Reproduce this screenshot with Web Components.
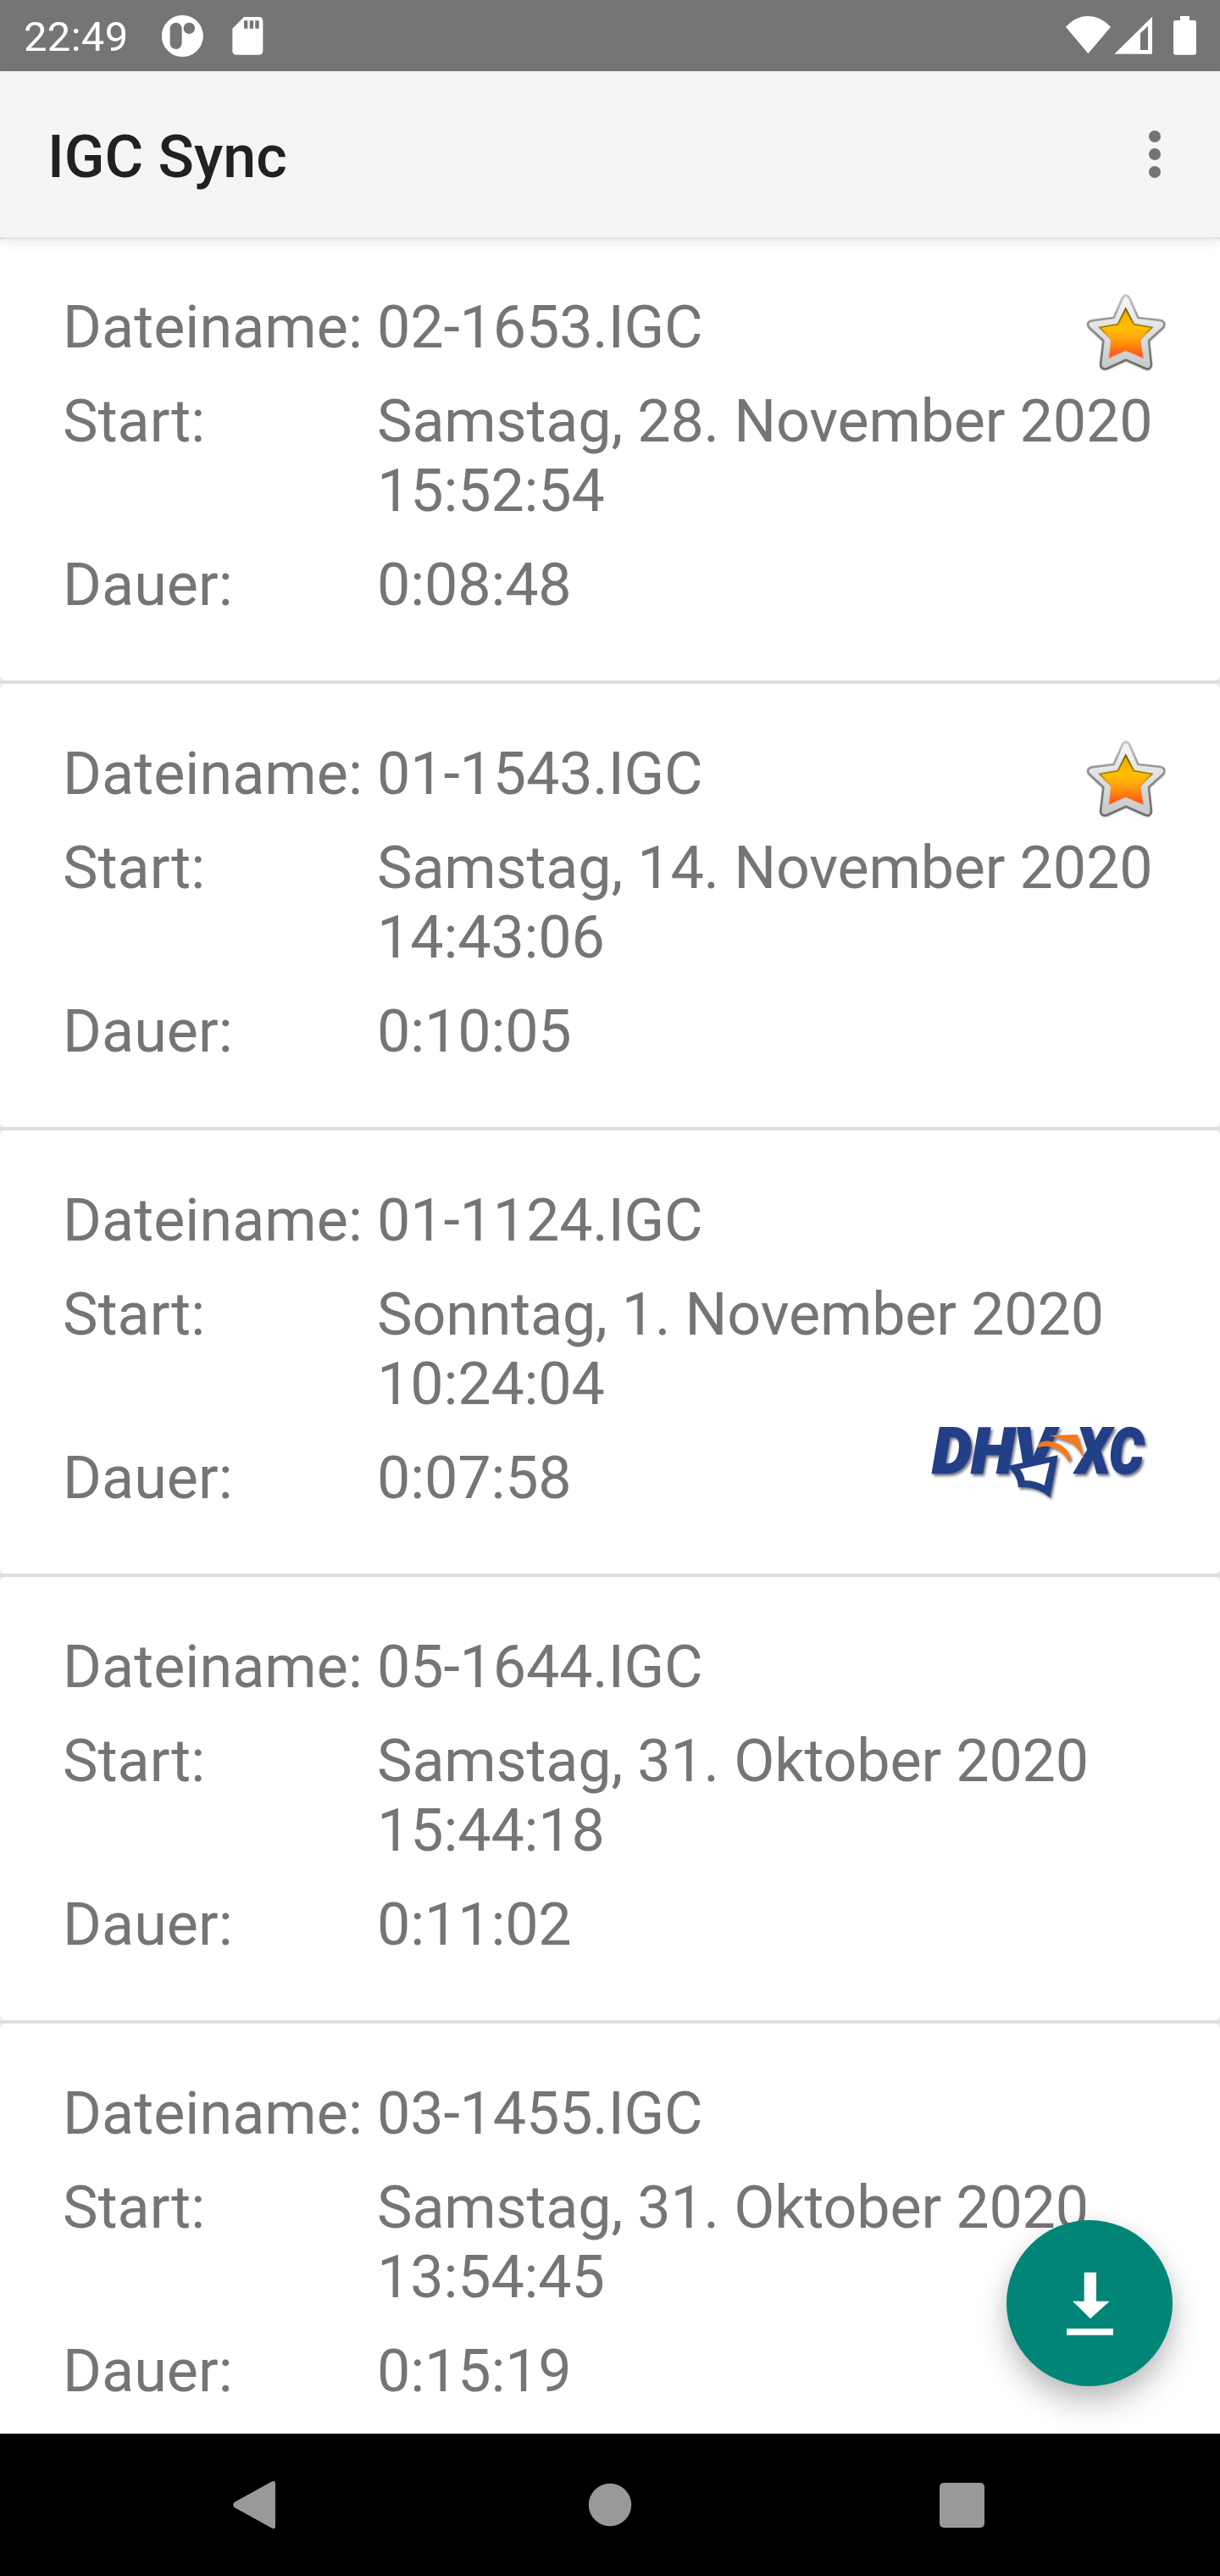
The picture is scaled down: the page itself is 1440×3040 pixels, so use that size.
<!DOCTYPE html>
<html lang="de">
<head>
<meta charset="utf-8">
<title>IGC Sync</title>
<style>
html,body{margin:0;padding:0;background:#fff}
body{font-family:Roboto,"Liberation Sans",sans-serif}
</style>
</head>
<body>
<igc-screen></igc-screen>
<script>
const define = (name, html, setup) => customElements.define(name, class extends HTMLElement {
  constructor() {
    super();
    const t = document.createElement('template');
    t.innerHTML = html;
    this.attachShadow({mode: 'open'}).append(t.content.cloneNode(true));
  }
  connectedCallback() { if (setup) setup(this, this.shadowRoot); }
});

define('status-bar', `
<style>
:host{display:flex;height:84px;background:#757575;color:#fff;padding:0 28px;box-sizing:border-box;justify-content:space-between}
.side{display:flex;align-items:flex-start}
.time{font-size:49px;line-height:58px;margin-top:15px;width:163px;letter-spacing:.3px}
svg{display:block;height:84px}
</style>
<div class="side">
  <div class="time">22:49</div>
  <svg width="130" viewBox="573 0 390 252" fill="#fff">
    <path fill-rule="evenodd" d="M646 54a73.500 73.500 0 1 0 .1 0ZM602 101a21 21 0 0 1 42 0v52a21 21 0 0 1-42 0ZM670 80a20 20 0 1 1-.1 0Z"/>
    <path fill-rule="evenodd" d="M864 60H918a13 13 0 0 1 13 13V181a13 13 0 0 1-13 13H836a13 13 0 0 1-13-13V101ZM864 73V101H877V73ZM884 73V101H897V73ZM904 73V101H917V73Z"/>
  </svg>
</div>
<svg width="154" viewBox="174 0 462 252" fill="#fff">
  <path d="M174 95Q209 57 253 57T333 95L253 190Z"/>
  <path fill-rule="evenodd" d="M346 191.500L480 59V191.500ZM438 118V177H465V92Z"/>
  <path d="M579 57H612V72H629a7 7 0 0 1 7 7V187a7 7 0 0 1-7 7H562a7 7 0 0 1-7-7V79a7 7 0 0 1 7-7H579Z"/>
</svg>`);

define('app-bar', `
<style>
:host{display:flex;position:relative;z-index:1;height:196px;box-sizing:border-box;background:#f5f5f5;color:#212121;align-items:center;justify-content:space-between;padding:5px 70px 0 56px;box-shadow:0 2px 3px rgba(0,0,0,.07),0 5px 14px rgba(0,0,0,.09)}
.title{font-size:70px;line-height:82px;font-weight:500}
svg{display:block;margin-top:-5px}
</style>
<div class="title"><slot></slot></div>
<svg width="14" height="56" viewBox="0 0 14 56" fill="#737373"><circle cx="7" cy="7" r="7"/><circle cx="7" cy="28" r="7"/><circle cx="7" cy="49" r="7"/></svg>`);

define('star-icon', `
<style>:host{display:block}svg{display:block;overflow:visible}</style>
<svg width="140" height="130" viewBox="0 0 420 390">
  <defs>
    <linearGradient id="rim" x1="0" y1="0" x2="0" y2="1"><stop offset="0" stop-color="#f6f6f6"/><stop offset=".5" stop-color="#e0e0e0"/><stop offset="1" stop-color="#c8c8c8"/></linearGradient>
    <linearGradient id="edge" x1="0" y1="0" x2="0" y2="1"><stop offset="0" stop-color="#c4c4c4"/><stop offset=".4" stop-color="#909090"/><stop offset="1" stop-color="#6c6c6c"/></linearGradient>
    <linearGradient id="gold" x1="0" y1="0" x2="0" y2="1"><stop offset="0" stop-color="#f0ac00"/><stop offset=".4" stop-color="#ffbe00"/><stop offset=".6" stop-color="#ffa60c"/><stop offset=".8" stop-color="#ff7d10"/><stop offset="1" stop-color="#ff4c18"/></linearGradient>
    <linearGradient id="shade" x1="0" y1="0" x2="0" y2="1"><stop offset="0" stop-color="#7a6000"/><stop offset=".4" stop-color="#9a7a00" stop-opacity=".85"/><stop offset=".6" stop-color="#f08010" stop-opacity=".5"/><stop offset="1" stop-color="#ff5a20" stop-opacity=".7"/></linearGradient>
    <filter id="soft" x="-10%" y="-10%" width="120%" height="120%"><feGaussianBlur stdDeviation="2.200"/></filter>
    <filter id="drop" x="-20%" y="-20%" width="140%" height="140%"><feGaussianBlur stdDeviation="4"/></filter>
  </defs>
  <path d="M194 66Q207 46 220 66L250 135L330 144Q350 150 340 169L288 216L297 302Q294 321 275 314L207 284L140 315Q120 320 117 302L127 216L76 169Q65 151 86 145L164 135Z" transform="translate(0 5)" fill="#666" opacity=".5" filter="url(#drop)"/>
  <path filter="url(#soft)" d="M194 66Q207 46 220 66L250 135L330 144Q350 150 340 169L288 216L297 302Q294 321 275 314L207 284L140 315Q120 320 117 302L127 216L76 169Q65 151 86 145L164 135Z" fill="url(#rim)" stroke="url(#edge)" stroke-width="8" stroke-linejoin="round"/>
  <path filter="url(#soft)" d="M206 103L235 158L299 169L256 214L266 275L206 249L149 275L156 214L114 169L178 158Z" fill="url(#gold)" stroke="url(#shade)" stroke-width="6"/>
</svg>`);

define('dhv-logo', `
<style>:host{display:block}svg{display:block;overflow:visible}
text{font-family:Roboto,"Liberation Sans",sans-serif;font-weight:900;font-style:italic;font-size:222px;fill:#233f87;stroke:#233f87;stroke-width:7px}</style>
<svg width="300" height="130" viewBox="0 0 900 390">
  <defs><filter id="s" x="-5%" y="-10%" width="112%" height="125%">
    <feDropShadow dx="6" dy="8" stdDeviation="4" flood-color="#3b3b55" flood-opacity=".7"/></filter></defs>
  <g filter="url(#s)">
    <text x="62" y="235" textLength="430" lengthAdjust="spacingAndGlyphs">DHV</text>
    <text x="573" y="235" textLength="236" lengthAdjust="spacingAndGlyphs">XC</text>
    <path fill="#fff" d="M366 216L482 192L462 285L386 268Z"/>
    <path fill="#233f87" fill-rule="evenodd" d="M325 211L506 172L478 322Q430 278 366 286Q366 244 325 211ZM372 221Q386 240 389 262Q425 261 458 279L477 198Z"/>
    <path fill="#f47a1b" d="M434 146Q437 119 475 122Q535 132 552 181L543 194Q524 157 490 145Q459 135 434 146Z"/>
    <path fill="#f47a1b" d="M474 102L575 99L601 188Q578 145 552 127Q517 113 474 102Z"/>
  </g>
</svg>`);

define('flight-card', `
<style>
:host{display:block;position:relative;height:523px;box-sizing:border-box;background:#fff;border-radius:7px;padding:65px 70px 0 74px;color:#757575;font-size:70px;line-height:82px;letter-spacing:-.15px}
dl{display:grid;grid-template-columns:371px 1fr;row-gap:29px;margin:0}
dt,dd{margin:0;white-space:nowrap}
dt{letter-spacing:.08px}
dd span{display:block}
star-icon{position:absolute;left:1260px;top:50px}
dhv-logo{position:absolute;left:1080px;top:326px;letter-spacing:0}
</style>
<dl><dt>Dateiname:</dt><dd id="n"></dd><dt>Start:</dt><dd><span id="d"></span><span id="t"></span></dd><dt>Dauer:</dt><dd id="l"></dd></dl>`,
(host, root) => {
  for (const [id, key] of [['n','file'],['d','date'],['t','time'],['l','duration']])
    root.getElementById(id).textContent = host.getAttribute(key);
  if (host.hasAttribute('starred')) root.append(document.createElement('star-icon'));
  if (host.hasAttribute('dhv')) root.append(document.createElement('dhv-logo'));
});

define('download-fab', `
<style>:host{display:block;width:196px;height:196px;border-radius:50%;background:#008577;box-shadow:0 20px 36px rgba(0,0,0,.23),0 4px 22px rgba(0,0,0,.07)}svg{display:block}</style>
<svg width="196" height="196" viewBox="114 120 588 588" fill="#fff"><path d="M389 305H432V407H479L411 469L348 407H389ZM327 504H492V527H327Z"/></svg>`);

define('nav-bar', `
<style>:host{display:flex;height:168px;background:#000;align-items:center;justify-content:space-between;padding:0 278px 0 275px}svg{display:block}.home{margin-left:4px}</style>
<svg width="52" height="60" viewBox="0 0 52 60" fill="#999"><path d="M1.500 27L45 3Q50 0 50 5V55Q50 60 45 57L1.500 33Q-1 30 1.500 27Z"/></svg>
<svg class="home" width="52" height="52" viewBox="0 0 52 52" fill="#999"><circle cx="26" cy="26" r="25.200"/></svg>
<svg width="53" height="53" viewBox="0 0 53 53" fill="#999"><rect width="53" height="53" rx="5"/></svg>`);

define('igc-screen', `
<style>
:host{display:flex;flex-direction:column;width:1440px;height:3040px;overflow:hidden;position:relative}
.list{flex:1;min-height:0;overflow:hidden;display:flex;flex-direction:column;gap:4px;background:repeating-linear-gradient(#ececec 0 523px,#dedede 523px 527px);position:relative}
flight-card{flex:none}
download-fab{position:absolute;right:56px;bottom:56px}
</style>
<status-bar></status-bar>
<app-bar>IGC Sync</app-bar>
<div class="list">
<flight-card file="02-1653.IGC" date="Samstag, 28. November 2020" time="15:52:54" duration="0:08:48" starred></flight-card>
<flight-card file="01-1543.IGC" date="Samstag, 14. November 2020" time="14:43:06" duration="0:10:05" starred></flight-card>
<flight-card file="01-1124.IGC" date="Sonntag, 1. November 2020" time="10:24:04" duration="0:07:58" dhv></flight-card>
<flight-card file="05-1644.IGC" date="Samstag, 31. Oktober 2020" time="15:44:18" duration="0:11:02"></flight-card>
<flight-card file="03-1455.IGC" date="Samstag, 31. Oktober 2020" time="13:54:45" duration="0:15:19"></flight-card>
<download-fab></download-fab>
</div>
<nav-bar></nav-bar>`);
</script>
</body>
</html>
